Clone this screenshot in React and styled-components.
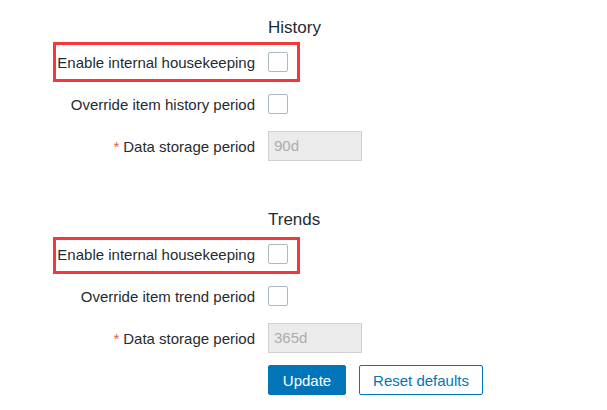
import React from 'react'
import styled, { createGlobalStyle } from 'styled-components'

const Global = createGlobalStyle`
  html, body {
    margin: 0;
    background: #ffffff;
  }
  body {
    font-family: Arial, "Liberation Sans", sans-serif;
    color: #1f2c33;
  }
`

const Page = styled.div`
  width: 607px;
  height: 410px;
  padding-top: 17px;
  box-sizing: border-box;
  display: flex;
  flex-direction: column;
  gap: 48px;
`

const Section = styled.div`
  display: flex;
  flex-direction: column;
  gap: 12px;
`

const Heading = styled.div`
  margin-left: 268px;
  font-size: 17px;
  line-height: 22px;
  margin-bottom: -4px;
`

const Row = styled.div`
  position: relative;
  display: flex;
  align-items: center;
  height: 30px;
`

const Label = styled.label`
  width: 255px;
  text-align: right;
  font-size: 15px;
  padding-right: 13px;
  flex-shrink: 0;
`

const Star = styled.span`
  color: #e45959;
  margin-right: 4px;
`

const Highlight = styled.div`
  position: absolute;
  left: 53px;
  top: ${p => p.$top}px;
  width: 247px;
  height: ${p => p.$h}px;
  border: 3px solid #f4393d;
  box-sizing: border-box;
  pointer-events: none;
`

const Checkbox = styled.span`
  display: inline-block;
  width: 18px;
  height: 18px;
  border: 1px solid #acbbc2;
  border-radius: 2px;
  background: #ffffff;
`

const Input = styled.div`
  width: 94px;
  height: 30px;
  box-sizing: border-box;
  border: 1px solid #d0d0d0;
  background: #ebebeb;
  color: #acacac;
  font-size: 15px;
  line-height: 28px;
  padding-left: 5px;
`

const Buttons = styled.div`
  display: flex;
  gap: 13px;
`

const Button = styled.button`
  height: 30px;
  padding: 0;
  width: ${p => p.$w}px;
  font-family: Arial, "Liberation Sans", sans-serif;
  font-size: 15px;
  border-radius: 2px;
  border: 1px solid #0275b8;
  background: ${p => (p.$primary ? '#0275b8' : '#ffffff')};
  color: ${p => (p.$primary ? '#ffffff' : '#0275b8')};
`

const Block = ({ title, override, value, top, h, children }) => (
  <Section>
    <Heading>{title}</Heading>
    <Row>
      <Highlight $top={top} $h={h} />
      <Label>Enable internal housekeeping</Label>
      <Checkbox />
    </Row>
    <Row>
      <Label>{override}</Label>
      <Checkbox />
    </Row>
    <Row>
      <Label><Star>*</Star>Data storage period</Label>
      <Input>{value}</Input>
    </Row>
    {children}
  </Section>
)

export default function App() {
  return (
    <Page>
      <Global />
      <Block title="History" override="Override item history period" value="90d" top={-5} h={40} />
      <Block title="Trends" override="Override item trend period" value="365d" top={-2} h={37}>
        <Row>
          <Label />
          <Buttons>
            <Button $primary $w={78}>Update</Button>
            <Button $w={124}>Reset defaults</Button>
          </Buttons>
        </Row>
      </Block>
    </Page>
  )
}
